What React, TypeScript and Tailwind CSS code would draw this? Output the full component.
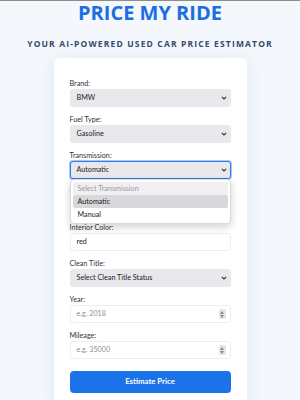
import { ReactNode } from "react";

const bodyFont = { fontFamily: 'Lato, "Open Sans", Arial, sans-serif' };
const headFont = { fontFamily: '"Open Sans", "Noto Sans", Arial, sans-serif' };

function Chevron() {
  return (
    <svg width="6" height="4" viewBox="0 0 6 4" className="shrink-0">
      <path d="M0.8 0.8 L3 3 L5.2 0.8" fill="none" stroke="#333" strokeWidth="1.1" />
    </svg>
  );
}

function Spinner() {
  return (
    <div className="w-[7px] h-[10px] bg-[#e6e6e6] rounded-[1px] flex flex-col items-center justify-center gap-[1px] shrink-0">
      <svg width="4" height="3" viewBox="0 0 4 3">
        <path d="M0 3 L2 0 L4 3 Z" fill="#8a8a8a" />
      </svg>
      <svg width="4" height="3" viewBox="0 0 4 3">
        <path d="M0 0 L2 3 L4 0 Z" fill="#8a8a8a" />
      </svg>
    </div>
  );
}

function Field({ label, children }: { label: string; children: ReactNode }) {
  return (
    <div className="flex flex-col">
      <span className="text-[7.2px] leading-[10px] text-[#333]">{label}</span>
      {children}
    </div>
  );
}

function SelectBox({ value, focused }: { value: string; focused?: boolean }) {
  return (
    <div
      className={
        focused
          ? "h-[18px] rounded-[3px] bg-[#e9e9ed] border border-[#2f7be8] shadow-[0_0_0_1px_#a9c8f5] flex items-center justify-between pl-[6px] pr-[3px]"
          : "h-[18px] rounded-[3px] bg-[#e9e9ed] flex items-center justify-between pl-[7px] pr-[4px]"
      }
    >
      <span className="text-[7.2px] text-[#222]">{value}</span>
      <Chevron />
    </div>
  );
}

function TextBox({ placeholder, value, number }: { placeholder?: string; value?: string; number?: boolean }) {
  return (
    <div className="h-[18px] rounded-[3px] bg-white border border-[#ededed] flex items-center justify-between pl-[6px] pr-[4px]">
      <span className={value ? "text-[7.2px] text-[#222]" : "text-[7.2px] text-[#8f8f8f]"}>
        {value ?? placeholder}
      </span>
      {number && <Spinner />}
    </div>
  );
}

export default function App() {
  return (
    <div className="min-h-[400px] bg-[#f4f7fb] border-t border-[#8c8c8c] flex flex-col items-center overflow-hidden" style={bodyFont}>
      <h1 className="mt-[1px] text-[20px] leading-[22px] font-bold text-[#1c6fe0]" style={headFont}>
        PRICE MY RIDE
      </h1>
      <h2 className="mt-[14px] text-[8.5px] leading-[12px] font-bold tracking-[1.15px] text-[#34496b]" style={headFont}>
        YOUR AI-POWERED USED CAR PRICE ESTIMATOR
      </h2>

      <div className="mt-[8px] w-[193px] bg-white rounded-[6px] shadow-[0_2px_14px_rgba(120,160,220,0.18)] px-[16px] pt-[21px] pb-[16px] flex flex-col gap-[8px]">
        <Field label="Brand:">
          <SelectBox value="BMW" />
        </Field>
        <Field label="Fuel Type:">
          <SelectBox value="Gasoline" />
        </Field>
        <div className="relative">
          <Field label="Transmission:">
            <SelectBox value="Automatic" focused />
          </Field>
          <div className="absolute left-0 right-0 top-[28px] z-10 bg-white rounded-[4px] border border-[#d9d9d9] shadow-[0_3px_8px_rgba(0,0,0,0.18)] p-[2px] flex flex-col text-[7.2px]">
            <div className="h-[13px] leading-[13px] px-[5px] rounded-[2px] bg-[#f0f0f2] text-[#9a9a9a]">Select Transmission</div>
            <div className="h-[13px] leading-[13px] px-[5px] rounded-[2px] bg-[#d8d8da] text-[#222]">Automatic</div>
            <div className="h-[13px] leading-[13px] px-[5px] text-[#222]">Manual</div>
          </div>
        </div>
        <Field label="Exterior Color:">
          <TextBox placeholder="e.g. black" />
        </Field>
        <Field label="Interior Color:">
          <TextBox value="red" />
        </Field>
        <Field label="Clean Title:">
          <SelectBox value="Select Clean Title Status" />
        </Field>
        <Field label="Year:">
          <TextBox placeholder="e.g. 2018" number />
        </Field>
        <Field label="Mileage:">
          <TextBox placeholder="e.g. 35000" number />
        </Field>
        <button className="mt-[4px] h-[22px] rounded-[4px] bg-[#1a73e8] text-white text-[7.8px] font-bold" style={bodyFont}>
          Estimate Price
        </button>
      </div>
    </div>
  );
}
